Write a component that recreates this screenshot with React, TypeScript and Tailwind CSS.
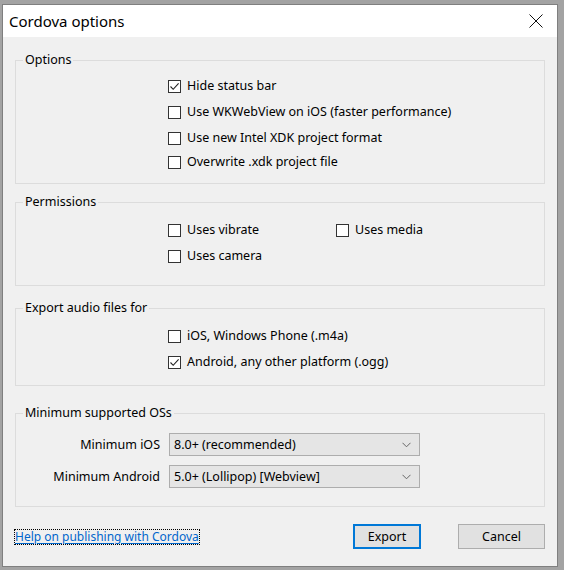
import { useState } from "react";

function Check({ checked }: { checked: boolean }) {
  return (
    <span className="w-[13px] h-[13px] border border-[#333333] bg-white flex items-center justify-center shrink-0">
      {checked && (
        <svg width="11" height="11" viewBox="0 0 11 11" fill="none">
          <path d="M1.5 5.5 L4.2 8.3 L9.6 2.4" stroke="#222" strokeWidth="1.1" />
        </svg>
      )}
    </span>
  );
}

function CheckRow({ label, checked = false }: { label: string; checked?: boolean }) {
  const [on, setOn] = useState(checked);
  return (
    <label
      className="flex items-center gap-[6px] h-[20px] cursor-default"
      onClick={() => setOn(!on)}
    >
      <Check checked={on} />
      <span className="text-[#000] whitespace-nowrap">{label}</span>
    </label>
  );
}

function Select({ value }: { value: string }) {
  return (
    <div className="w-[251px] h-[23px] bg-[#e5e5e5] border border-[#adadad] flex items-center justify-between pl-[4px] pr-[8px]">
      <span className="whitespace-nowrap">{value}</span>
      <svg width="9" height="6" viewBox="0 0 9 6" fill="none">
        <path d="M0.5 0.8 L4.5 4.8 L8.5 0.8" stroke="#666" strokeWidth="1" />
      </svg>
    </div>
  );
}

export default function App() {
  return (
    <div
      className="w-[564px] h-[570px] bg-[#a3a3a3] pt-[4px] pl-[2px] text-[12.5px] leading-[16px] text-black"
      style={{ fontFamily: '"Noto Sans", "Segoe UI", sans-serif' }}
    >
      <div className="w-[556px] h-[563px] border border-[#7f7f7f] bg-[#f0f0f0] flex flex-col">
        <div className="h-[32px] bg-white flex items-center justify-between pl-[6px] pr-[14px] shrink-0">
          <span className="text-[15px] leading-[20px]">Cordova options</span>
          <svg width="14" height="14" viewBox="0 0 14 14" fill="none">
            <path d="M0.5 0.5 L13.5 13.5 M13.5 0.5 L0.5 13.5" stroke="#111" strokeWidth="1" />
          </svg>
        </div>

        <div className="flex flex-col px-[12px] pt-[15px]">
          <fieldset className="border border-[#dcdcdc] pt-[8px] pb-[11px]">
            <legend className="ml-[7px] px-[2px]">Options</legend>
            <div className="pl-[152px]">
              <div className="flex flex-col gap-[6px]">
                <CheckRow label="Hide status bar" checked />
                <CheckRow label="Use WKWebView on iOS (faster performance)" />
                <CheckRow label="Use new Intel XDK project format" />
              </div>
              <div className="mt-[4px]">
                <CheckRow label="Overwrite .xdk project file" />
              </div>
            </div>
          </fieldset>

          <fieldset className="mt-[10px] border border-[#dcdcdc] pt-[10px] pb-[19px]">
            <legend className="ml-[7px] px-[2px]">Permissions</legend>
            <div className="pl-[152px] grid grid-cols-[168px_auto] gap-y-[6px]">
              <CheckRow label="Uses vibrate" />
              <CheckRow label="Uses media" />
              <CheckRow label="Uses camera" />
            </div>
          </fieldset>

          <fieldset className="mt-[14px] border border-[#dcdcdc] pt-[10px] pb-[13px]">
            <legend className="ml-[7px] px-[2px]">Export audio files for</legend>
            <div className="pl-[152px] flex flex-col gap-[6px]">
              <CheckRow label="iOS, Windows Phone (.m4a)" />
              <CheckRow label="Android, any other platform (.ogg)" checked />
            </div>
          </fieldset>

          <fieldset className="mt-[19px] border border-[#dcdcdc] pt-[12px] pb-[18px]">
            <legend className="ml-[7px] px-[2px]">Minimum supported OSs</legend>
            <div className="grid grid-cols-[144px_auto] gap-x-[9px] gap-y-[9px] items-center">
              <span className="text-right">Minimum iOS</span>
              <Select value="8.0+ (recommended)" />
              <span className="text-right">Minimum Android</span>
              <Select value="5.0+ (Lollipop) [Webview]" />
            </div>
          </fieldset>

          <div className="mt-[17px] flex items-center">
            <a
              href="#"
              className="outline-1 outline-dotted outline-black text-[12px] text-[#0066cc] underline underline-offset-2 leading-[14px] whitespace-nowrap"
            >
              Help on publishing with Cordova
            </a>
            <div className="ml-auto flex gap-[37px]">
              <button className="w-[68px] h-[25px] border-2 border-[#0078d7] bg-[#e1e1e1]">
                Export
              </button>
              <button className="w-[87px] h-[25px] border border-[#adadad] bg-[#e1e1e1]">
                Cancel
              </button>
            </div>
          </div>
        </div>
      </div>
    </div>
  );
}
